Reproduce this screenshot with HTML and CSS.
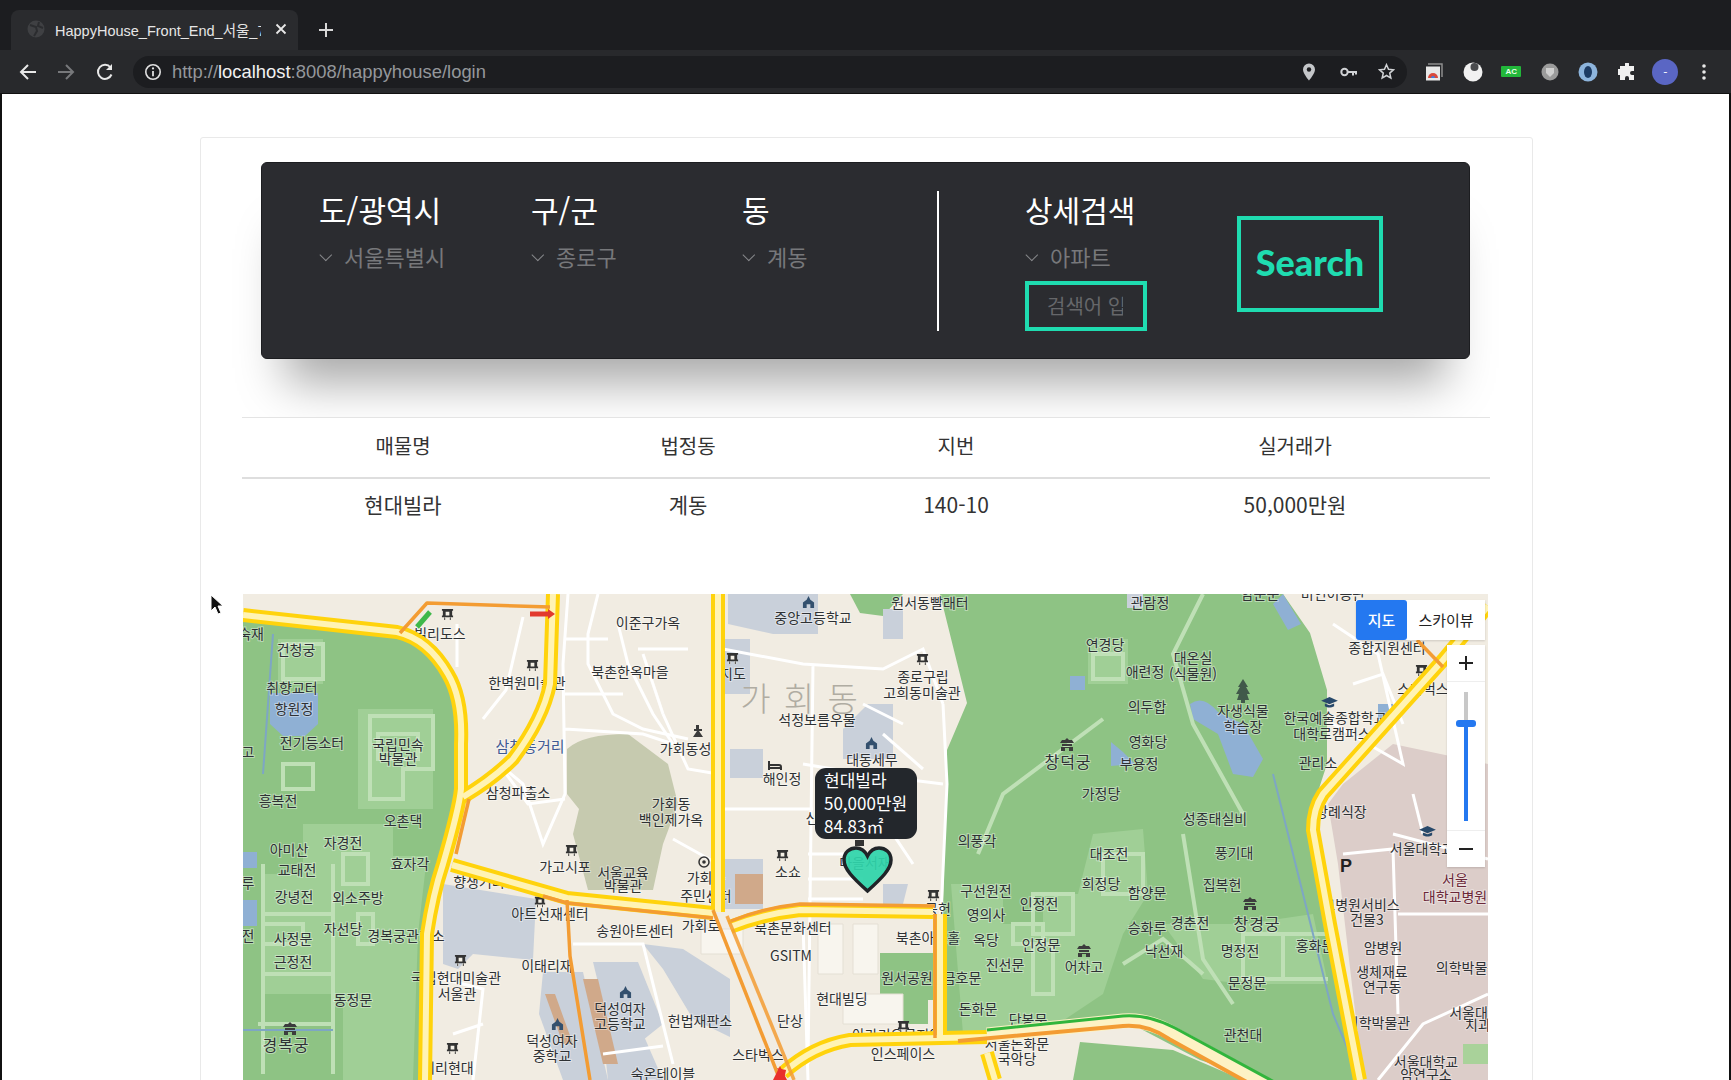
FILE: index.html
```html
<!DOCTYPE html>
<html lang="ko">
<head>
  <meta charset="UTF-8">
  <title>HappyHouse</title>
  <link rel="stylesheet" href="styles.css">
</head>
<body>
  <div class="tabstrip">
    <div class="tab">
      <svg class="tab-icon" width="20" height="20" viewBox="0 0 20 20"><circle cx="10" cy="10" r="8.5" fill="#3f4043"/><path d="M4 6l6 2 1 4-3 5M13 3l-1 4 5 2" fill="none" stroke="#2b2c2f" stroke-width="2"/></svg>
      <span class="tab-title">HappyHouse_Front_End_서울_7</span>
      <svg class="tab-close" width="12" height="12" viewBox="0 0 12 12"><path d="M1.5 1.5l9 9M10.5 1.5l-9 9" stroke="#e8e8e8" stroke-width="1.8"/></svg>
    </div>
    <svg class="tab-new" width="16" height="16" viewBox="0 0 16 16"><path d="M8 1v14M1 8h14" stroke="#d8d8d8" stroke-width="2"/></svg>
  </div>

  <div class="toolbar">
    <svg class="nav-back" width="20" height="20" viewBox="0 0 20 20"><path d="M18 10H3M10 3l-7 7 7 7" fill="none" stroke="#e8e8e8" stroke-width="2"/></svg>
    <svg class="nav-fwd" width="20" height="20" viewBox="0 0 20 20"><path d="M2 10h15M10 3l7 7-7 7" fill="none" stroke="#77787b" stroke-width="2"/></svg>
    <svg class="nav-reload" width="20" height="20" viewBox="0 0 20 20"><path d="M16.5 12.5A7 7 0 1 1 15.5 5.5" fill="none" stroke="#e8e8e8" stroke-width="2"/><path d="M17 2v6h-6z" fill="#e8e8e8"/></svg>
    <div class="omnibox">
      <svg class="info" width="18" height="18" viewBox="0 0 18 18"><circle cx="9" cy="9" r="7.2" fill="none" stroke="#e0e0e0" stroke-width="1.6"/><path d="M9 8v5.2" stroke="#e0e0e0" stroke-width="1.8"/><circle cx="9" cy="5.4" r="1.1" fill="#e0e0e0"/></svg>
      <span class="url">http://<b>localhost</b>:8008/happyhouse/login</span>
      <span class="omni-icons">
        <svg class="omni-pin" width="14" height="18" viewBox="0 0 14 18"><path d="M7 0.5a6 6 0 0 0-6 6c0 4.2 6 11 6 11s6-6.800 6-11a6 6 0 0 0-6-6z" fill="#c4c6c9"/><circle cx="7" cy="6.500" r="2.200" fill="#1c1d20"/></svg>
        <svg class="omni-key" width="18" height="12" viewBox="0 0 18 12"><circle cx="4.500" cy="6" r="3.200" fill="none" stroke="#d0d2d5" stroke-width="2"/><path d="M8 6h9M13 6v3.500M16 6v2.500" fill="none" stroke="#d0d2d5" stroke-width="2"/></svg>
        <svg class="omni-star" width="17" height="17" viewBox="0 0 20 20"><path d="M10 2l2.400 5.400 5.800.600-4.400 3.900 1.300 5.800L10 14.700l-5.100 3 1.300-5.800L1.800 8l5.800-.600z" fill="none" stroke="#d0d2d5" stroke-width="1.800"/></svg>
      </span>
    </div>
    <div class="extensions">
      <svg width="18" height="18" viewBox="0 0 18 18"><path d="M3 1h14v13" fill="none" stroke="#8d8d8d" stroke-width="1.500"/><rect x="1" y="3.500" width="14" height="14" fill="#e8e8e8"/><path d="M3 15a5 5 0 0 1 10 0z" fill="#d9483b"/><path d="M6 15a2 2 0 0 1 4 0z" fill="#3f7ee0"/></svg>
      <svg width="20" height="20" viewBox="0 0 20 20"><circle cx="10" cy="10" r="9.500" fill="#f1f1f1"/><circle cx="11.500" cy="5" r="4" fill="#4a4b4e"/></svg>
      <span class="ext-ac">AC</span>
      <svg width="18" height="18" viewBox="0 0 18 18"><circle cx="9" cy="9" r="8.500" fill="#9b9b9b"/><path d="M5 5h8v5l-4 4-4-4z" fill="#cfcfcf"/></svg>
      <svg width="20" height="20" viewBox="0 0 20 20"><circle cx="10" cy="10" r="9.500" fill="#8db4dc"/><ellipse cx="10" cy="10" rx="4" ry="6" fill="#1d3b63"/></svg>
      <svg width="18" height="18" viewBox="0 0 18 18"><path d="M7 1a2 2 0 0 1 4 0v2h5v5h-2a2 2 0 0 0 0 4h2v5h-5v-2a2 2 0 0 0-4 0v2H2v-5H0a2 2 0 0 1 0-6h2V3h5z" fill="#f0f0f0"/></svg>
      <span class="avatar">-</span>
      <svg width="6" height="18" viewBox="0 0 6 18"><circle cx="3" cy="3" r="1.800" fill="#e8e8e8"/><circle cx="3" cy="9" r="1.800" fill="#e8e8e8"/><circle cx="3" cy="15" r="1.800" fill="#e8e8e8"/></svg>
    </div>
  </div>

  <div class="page">
    <div class="card">
      <div class="search-panel">
        <div class="field field-city">
          <div class="field-title">도/광역시</div>
          <div class="select-like"><i class="chev"></i>서울특별시</div>
        </div>
        <div class="field field-gu">
          <div class="field-title">구/군</div>
          <div class="select-like"><i class="chev"></i>종로구</div>
        </div>
        <div class="field field-dong">
          <div class="field-title">동</div>
          <div class="select-like"><i class="chev"></i>계동</div>
        </div>
        <div class="divider"></div>
        <div class="field field-detail">
          <div class="field-title">상세검색</div>
          <div class="select-like"><i class="chev"></i>아파트</div>
          <div class="keyword"><span>검색어 입력</span></div>
        </div>
        <div class="search-btn">Search</div>
      </div>

      <table class="deal-table">
        <colgroup>
          <col class="col-a"><col class="col-b"><col class="col-c"><col class="col-d">
        </colgroup>
        <thead>
          <tr><th>매물명</th><th>법정동</th><th>지번</th><th>실거래가</th></tr>
        </thead>
        <tbody>
          <tr><td>현대빌라</td><td>계동</td><td>140-10</td><td>50,000만원</td></tr>
        </tbody>
      </table>

      <div class="map">
        <svg class="map-canvas" width="1245" height="486" viewBox="0 0 1245 486">
          <defs>
            <symbol id="gate" viewBox="0 0 14 14"><path d="M1 1h12v2h-1v5h1v2H1V8h1V3H1z" fill="#333"/><path d="M5 4h4v4H5zM3 10h2v3H3zM9 10h2v3H9z" fill="#f4f0e6"/><path d="M3.500 10h1v3h-1zM9.500 10h1v3h-1z" fill="#333"/></symbol>
            <symbol id="palace" viewBox="0 0 14 14"><path d="M7 0l2 2h3l2 3H0l2-3h3zM2 6h10v2H2zM1 9h12v4H1z" fill="#3c3c3c"/><path d="M5 10h4v3H5z" fill="#8fc483"/></symbol>
            <symbol id="school" viewBox="0 0 14 14"><path d="M7 0l2 4 4 3v6H9V9H5v4H1V7l4-3z" fill="#33506e"/></symbol>
            <symbol id="cap" viewBox="0 0 18 14"><path d="M9 1l9 4-9 4-9-4z" fill="#28496a"/><path d="M4 8v3c3 2 7 2 10 0V8l-5 2z" fill="#28496a"/></symbol>
          </defs>

          <rect class="land" width="1245" height="486"/>

          <!-- 비원 / 고궁 -->
          <path class="park" d="M0 21L154 38Q185 45 205 80Q220 105 218 150L218 195Q216 215 200 270Q190 300 184 340L178 486H0z"/>
          <path class="park" d="M697 0L724 109L704 156L700 313L704 440L744 438L877 424L957 466L1017 486H1114L1094 396L1070 236L1070 213L1084 170L1084 96L1067 39L1040 0z"/>
          <path class="park" d="M837 448L930 456L1000 486H830z"/>
          <path class="park" d="M607 0H660L640 22L617 19z"/>
          <path class="park" d="M637 359H704V406H685V430H660V406H637z"/>
          <path class="park-light" d="M60 230H150V262H184L175 340L170 486H100V400H20V280H60z"/>
          <path class="park-light" d="M115 115H190V215H115z"/>
          <path class="park-light" d="M35 45H80V90H35z"/>
          <path class="park-light" d="M708 290H760V330H800V300H835L850 240L900 235L905 300L880 340L860 400L800 440L720 440z"/>
          <path class="park-light" d="M920 330H1000L1070 320L1085 390H1000L960 385z"/>
          <path class="park-light" d="M845 45H885V90H845z"/>
          <path class="pink" d="M1085 210L1100 190L1150 150L1245 170V486H1120L1095 270z"/>
          <path class="pond" d="M27 99H75V130L62 142H40L27 130z"/>
          <path class="pond" d="M947 110Q960 100 975 118L1000 130L1020 165L1010 183L990 180L975 140L950 125z"/>
          <path class="pond" d="M0 258H14V274H0zM0 306H14V332H0zM1040 0L1058 30L1045 36L1030 10z"/>
          <path class="pond" d="M868 148L880 158L892 170L868 172zM827 82H842V96H827z"/>
          <path class="pond" d="M1135 110H1150V125H1135z"/>
          <path class="bld" d="M200 290L293 305L290 366L230 360L215 375L200 370z"/>
          <path class="bld" d="M300 378H340L365 486H320L296 420z"/>
          <path class="bld" d="M400 350L440 355L487 385V443L450 425L420 375z"/>
          <path class="bld" d="M350 368H395L420 430L395 450H370z"/>
          <path class="bld" d="M360 440H400L420 486H365z"/>
          <path class="bld" d="M480 45H507V100H480zM487 155H520V184H487zM640 290H665L660 310H640zM485 0H575V40H530L485 30zM625 110H650V165H600V135zM480 265H520V315H480z"/>
          <path class="bld" d="M884 0H900V14H884zM640 15H660V45H640z"/>
          <path class="gym" d="M340 385L355 385L375 470L360 470z"/>
          <path class="gym" d="M302 400H312L330 450H320z"/>
          <path class="gym" d="M492 280H520V310H492z"/>
          <path class="garden" d="M324 155Q340 140 385 140L425 170L435 210L420 250L410 296H345L330 240L336 215L324 200z"/>
          <path class="pale-bld" d="M458 335H500V360H458zM575 330H600V380H575zM610 330H635V380H610zM600 400H660V430H600z"/>
          <path class="campus" d="M1220 450H1250V470H1220z"/>

          <!-- 궁궐 담장, 보도 -->
          <g class="walk">
            <path d="M127 122H190V175H160V205H127zM135 140H175V165H135z"/>
            <path d="M20 270V480M90 270V480M20 320H90M15 430H90M20 380H90"/>
            <path d="M40 50H80V85H40zM40 170H70V195H40z"/>
            <path d="M100 260H125V290H100zM20 330H60V350H20zM115 320H130V350H115z"/>
            <path d="M850 60H880V85H850zM790 300H830V340H790zM860 260H900V300H860zM790 350H810V400H790zM770 330H800V350H770z"/>
            <path d="M1040 340H1000V385H1085M1040 340H1085M1040 340V385"/>
            <path d="M940 240L960 365L990 410M960 0L930 60L950 130L1000 220"/>
            <path d="M860 125L760 200L735 260M880 370L920 345L960 380"/>
          </g>
          <g class="path-blue">
            <path d="M30 40L20 180M1030 180L1050 260L1090 420L1118 486"/>
            <path d="M0 436H90"/>
          </g>
          <g class="road-w">
            <path d="M325 0L320 70L322 200L300 250L280 190L256 170M214 30V73M280 23L263 96L240 125M322 135L400 140L430 150M355 0L345 40L345 70L370 120L400 135L445 145"/>
            <path d="M375 30L385 70L410 120L430 150M400 60L420 120M322 100H380M322 45H365M395 55H445"/>
            <path d="M322 205L285 210L256 170M430 245L475 270M420 120L445 175L475 180"/>
            <path d="M480 55L560 70L640 75L680 55L700 110M570 70L565 470M700 110L704 190L698 320M560 170L620 180L700 190"/>
            <path d="M480 215H570M565 260L640 260M565 285H620M565 305H620M640 210L650 240L670 270"/>
            <path d="M560 330L565 486M640 140L680 175M620 110L660 130"/>
            <path d="M330 350H400L430 470M200 385L240 395L230 486M210 440L240 430M360 460L420 452"/>
            <path d="M1090 130L1160 170L1135 60L1090 30M1110 90L1140 80L1160 130"/>
            <path d="M1150 240L1245 265M1100 260L1150 255L1155 420M1155 320H1245M1135 486L1180 430L1245 400M1170 200L1180 240"/>
          </g>

          <!-- 지명 -->
          <g class="lb">
            <text x="405" y="28">이준구가옥</text>
            <text x="197" y="39">빌리도스</text>
            <text x="53" y="55">건청궁</text>
            <text x="387" y="77">북촌한옥마을</text>
            <text x="284" y="88">한벽원미술관</text>
            <text x="49" y="93">취향교터</text>
            <text x="51" y="114">항원정</text>
            <text x="69" y="148">전기등소터</text>
            <text x="155" y="150">국립민속</text>
            <text x="155" y="164">박물관</text>
            <text x="449" y="154">가회동성당</text>
            <text x="275" y="198">삼청파출소</text>
            <text x="35" y="206">흥복전</text>
            <text x="428" y="209">가회동</text>
            <text x="428" y="225">백인제가옥</text>
            <text x="160" y="226">오촌댁</text>
            <text x="100" y="248">자경전</text>
            <text x="46" y="255">아미산</text>
            <text x="167" y="269">효자각</text>
            <text x="54" y="275">교태전</text>
            <text x="322" y="272">가고시포</text>
            <text x="380" y="278">서울교육</text>
            <text x="380" y="291">박물관</text>
            <text x="463" y="283">가회동</text>
            <text x="463" y="301">주민센터</text>
            <text x="51" y="302">강녕전</text>
            <text x="115" y="303">외소주방</text>
            <text x="236" y="287">향생거리</text>
            <text x="307" y="319">아트선재센터</text>
            <text x="392" y="336">송원아트센터</text>
            <text x="458" y="331">가회로</text>
            <text x="100" y="334">자선당</text>
            <text x="163" y="341">경복궁관리소</text>
            <text x="50" y="344">사정문</text>
            <text x="50" y="367">근정전</text>
            <text x="304" y="371">이태리재</text>
            <text x="213" y="383">국립현대미술관</text>
            <text x="214" y="399">서울관</text>
            <text x="110" y="405">동정문</text>
            <text x="377" y="414">덕성여자</text>
            <text x="377" y="429">고등학교</text>
            <text x="457" y="426">헌법재판소</text>
            <text x="43" y="450" class="lb-wide">경복궁</text>
            <text x="309" y="446">덕성여자</text>
            <text x="309" y="461">중학교</text>
            <text x="205" y="473">미리현대</text>
            <text x="420" y="479">숙온테이블</text>
            <text x="8" y="39">숙재</text>
            <text x="5" y="157">고</text>
            <text x="5" y="341">전</text>
            <text x="5" y="288">루</text>

            <text x="687" y="8">원서동빨래터</text>
            <text x="907" y="8">관람정</text>
            <text x="570" y="23">중앙고등학교</text>
            <text x="862" y="50">연경당</text>
            <text x="950" y="63">대온실</text>
            <text x="950" y="79">(식물원)</text>
            <text x="902" y="77">애련정</text>
            <text x="680" y="82">종로구립</text>
            <text x="679" y="98">고희동미술관</text>
            <text x="490" y="79">지도</text>
            <text x="904" y="112">의두합</text>
            <text x="574" y="125">석정보름우물</text>
            <text x="1000" y="116">자생식물</text>
            <text x="1000" y="132">학습장</text>
            <text x="905" y="147">영화당</text>
            <text x="629" y="165">대동세무</text>
            <text x="825" y="167" class="lb-wide">창덕궁</text>
            <text x="896" y="169">부용정</text>
            <text x="539" y="184">해인정</text>
            <text x="858" y="199">가정당</text>
            <text x="972" y="224">성종태실비</text>
            <text x="569" y="223">신</text>
            <text x="734" y="246">의풍각</text>
            <text x="866" y="259">대조전</text>
            <text x="991" y="258">풍기대</text>
            <text x="545" y="277">소쇼</text>
            <text x="622" y="268">마을서재</text>
            <text x="858" y="289">희정당</text>
            <text x="743" y="296">구선원전</text>
            <text x="904" y="298">함양문</text>
            <text x="979" y="290">집복헌</text>
            <text x="796" y="309">인정전</text>
            <text x="695" y="314">공헌</text>
            <text x="743" y="320">영의사</text>
            <text x="904" y="333">승화루</text>
            <text x="947" y="328">경춘전</text>
            <text x="1014" y="329" class="lb-wide">창경궁</text>
            <text x="550" y="333">북촌문화센터</text>
            <text x="685" y="343">북촌아트홀</text>
            <text x="743" y="345">옥당</text>
            <text x="798" y="350">인정문</text>
            <text x="921" y="356">낙선재</text>
            <text x="997" y="356">명정전</text>
            <text x="548" y="361">GSITM</text>
            <text x="841" y="372">어차고</text>
            <text x="762" y="370">진선문</text>
            <text x="664" y="383">원서공원</text>
            <text x="719" y="383">금호문</text>
            <text x="1004" y="388">문정문</text>
            <text x="599" y="404">현대빌딩</text>
            <text x="735" y="414">돈화문</text>
            <text x="547" y="426">단상</text>
            <text x="785" y="425">단봉문</text>
            <text x="1000" y="440">관천대</text>
            <text x="774" y="449">서울돈화문</text>
            <text x="774" y="464">국악당</text>
            <text x="515" y="460">스타벅스</text>
            <text x="660" y="459">인스페이스</text>
            <text x="654" y="440">아라리오뮤지엄</text>

            <text x="1144" y="53">종합지원센터</text>
            <text x="1017" y="-1">함춘문</text>
            <text x="1090" y="-1">비인이용관</text>
            <text x="1180" y="94">스타벅스</text>
            <text x="1092" y="123">한국예술종합학교</text>
            <text x="1089" y="139">대학로캠퍼스</text>
            <text x="1075" y="168">관리소</text>
            <text x="1098" y="217">장례식장</text>
            <text x="1179" y="254">서울대학교</text>
            <text x="1118" y="310">보병원서비스</text>
            <text x="1124" y="325">건물3</text>
            <text x="1140" y="353">암병원</text>
            <text x="1139" y="377">생체재료</text>
            <text x="1139" y="392">연구동</text>
            <text x="1225" y="373">의학박물관</text>
            <text x="1232" y="418">서울대학</text>
            <text x="1235" y="430">치과</text>
            <text x="1135" y="428">의학박물관</text>
            <text x="1183" y="467">서울대학교</text>
            <text x="1183" y="480">암연구소</text>
            <text x="1072" y="351">홍화문</text>
          </g>
          <text class="lb lb-blue" x="287" y="151">삼청동거리</text>
          <text class="lb lb-red" x="1212" y="285">서울</text>
          <text class="lb lb-red" x="1212" y="302">대학교병원</text>
          <text class="lb-big" x="557" y="103">가 회 동</text>
          <text class="lb-p" x="1097" y="278">P</text>

          <!-- 지도 아이콘 -->
          <use href="#gate" x="198" y="14" width="13" height="13"/>
          <use href="#gate" x="283" y="65" width="13" height="13"/>
          <use href="#gate" x="322" y="250" width="13" height="13"/>
          <use href="#gate" x="211" y="360" width="13" height="13"/>
          <use href="#gate" x="203" y="448" width="13" height="13"/>
          <use href="#gate" x="533" y="255" width="13" height="13"/>
          <use href="#gate" x="673" y="59" width="13" height="13"/>
          <use href="#gate" x="483" y="58" width="13" height="13"/>
          <use href="#gate" x="684" y="295" width="13" height="13"/>
          <use href="#gate" x="654" y="426" width="13" height="13"/>
          <use href="#gate" x="291" y="302" width="12" height="12"/>
          <use href="#gate" x="1172" y="70" width="13" height="13"/>
          <use href="#palace" x="40" y="428" width="14" height="14"/>
          <use href="#palace" x="817" y="144" width="14" height="14"/>
          <use href="#palace" x="834" y="350" width="14" height="14"/>
          <use href="#palace" x="1000" y="303" width="14" height="14"/>
          <use href="#school" x="308" y="424" width="13" height="13"/>
          <use href="#school" x="376" y="392" width="13" height="13"/>
          <use href="#school" x="559" y="2" width="13" height="13"/>
          <use href="#school" x="622" y="143" width="13" height="13"/>
          <use href="#cap" x="1078" y="102" width="17" height="13"/>
          <use href="#cap" x="1176" y="231" width="17" height="13"/>
          <path d="M1000 88l5 8h-2l4 7h-3l2 6h-4v3h-4v-3h-4l2-6h-3l4-7h-2z" fill="#41594a" transform="translate(0 -3)"/>
          <path d="M453 131h3v4h3v2h-3l4 6h-10l4-6h-3v-2h2z" fill="#3b3b3b"/>
          <circle cx="461" cy="268" r="5" fill="none" stroke="#333" stroke-width="1.500"/><circle cx="461" cy="268" r="1.800" fill="#333"/>
          <path d="M526 167v9M527 171h9a2 2 0 0 1 2 2v3M527 174h11" fill="none" stroke="#333" stroke-width="2"/>

          <!-- 도로 -->
          <g class="road">
            <path d="M0 21L154 38Q185 45 205 80Q220 105 218 150L218 195Q216 215 200 270Q190 300 184 340L182 486"/>
            <path d="M310 0L307 90Q300 125 270 165Q250 185 220 203"/>
            <path d="M475 0V318"/>
            <path d="M209 271L324 304L470 319"/>
            <path d="M540 479Q570 452 607 446L744 443"/>
            <path d="M487 333Q520 320 557 316L690 318"/>
            <path d="M697 320V446"/>
            <path d="M744 459L752 486"/>
            <path d="M1245 12L1200 66L1080 200Q1070 215 1070 236L1087 330L1117 486"/>
          </g>
          <g class="road-in">
            <path d="M0 21L154 38Q185 45 205 80Q220 105 218 150L218 195Q216 215 200 270Q190 300 184 340L182 486"/>
            <path d="M310 0L307 90Q300 125 270 165Q250 185 220 203"/>
            <path d="M475 0V318"/>
            <path d="M209 271L324 304L470 319"/>
            <path d="M540 479Q570 452 607 446L744 443"/>
            <path d="M487 333Q520 320 557 316L690 318"/>
            <path d="M697 320V446"/>
            <path d="M744 459L752 486"/>
            <path d="M1245 12L1200 66L1080 200Q1070 215 1070 236L1087 330L1117 486"/>
          </g>
          <g class="road-orange">
            <path d="M300 302L324 309L470 324"/>
            <path d="M324 306L327 362L347 486"/>
            <path d="M470 316L537 486"/>
            <path d="M484 322L551 486" opacity=".85"/>
            <path d="M488 327Q520 314 557 310L692 312"/>
            <path d="M692 320V444"/>
            <path d="M213 260L226 205"/>
            <path d="M157 39L184 9L307 13"/>
            <path d="M1174 46L1200 73"/>
          </g>
          <path class="road-pale" d="M744 441L880 427Q905 425 930 440L1030 495"/>
          <path class="road-green" d="M744 436L880 422Q905 420 932 434L1035 490"/>
          <path class="road-orange-thin" d="M715 447L880 432Q905 430 926 445L1020 497"/>
          <path class="line-green" d="M174 33L187 18"/>
          <path class="line-red" d="M287 20H308"/>
          <path d="M305 15l7 5-7 5z" fill="#e23a2e"/>
          <path d="M541 486l-7-12 9 2z" fill="#e8302c"/>
          <path d="M530 486l7-14 7 14z" fill="#e8302c"/>

          <!-- 매물 마커 -->
          <path d="M612 246h9v6h-9z" fill="#333"/>
          <path class="heart" d="M624.500 297C610 284 601 275 601 266C601 258 607 254 613 254C618 254 622 257 624.500 262C627 257 631 254 636 254C642 254 648 258 648 266C648 275 639 284 624.500 297Z"/>
        </svg>

        <div class="map-tip">현대빌라<br>50,000만원<br>84.83㎡</div>

        <div class="map-type">
          <span class="type-on">지도</span>
          <span class="type-off">스카이뷰</span>
        </div>
        <div class="map-zoom">
          <div class="zoom-btn zoom-plus"><svg width="16" height="16" viewBox="0 0 16 16"><path d="M8 1v14M1 8h14" stroke="#222" stroke-width="2"/></svg></div>
          <div class="zoom-track"><i class="track-on"></i><i class="track-knob"></i></div>
          <div class="zoom-btn zoom-minus"><svg width="16" height="16" viewBox="0 0 16 16"><path d="M1 8h14" stroke="#222" stroke-width="2"/></svg></div>
        </div>
      </div>
    </div>
  </div>

  <svg class="cursor" width="16" height="22" viewBox="0 0 16 22"><path d="M2 1v16l4-4 3 7 3-1-3-7h5z" fill="#111" stroke="#fff" stroke-width="1"/></svg>
</body>
</html>
```

FILE: styles.css
```css
* { box-sizing: border-box; }
html, body { margin: 0; height: 1080px; overflow: hidden; }
body { font-family: "Noto Sans CJK KR", "Noto Sans", sans-serif; background: #fff; color: #333; position: relative; }

/* browser chrome */
.tabstrip { height: 50px; background: #1c1d20; display: flex; align-items: flex-end; padding-left: 11px; }
.tab { width: 287px; height: 40px; background: #2a2b2e; border-radius: 8px 8px 0 0; display: flex; align-items: center; padding: 0 11px 2px 15px; position: relative; }
.tab-icon { flex: none; }
.tab-title { font: 14.500px "Liberation Sans", "Noto Sans CJK KR", sans-serif; color: #e6e6e6; margin-left: 9px; width: 206px; white-space: nowrap; overflow: hidden; }
.tab-close { margin-left: 14px; flex: none; }
.tab-new { margin: 0 0 12px 20px; }
.toolbar { height: 44px; background: #28292c; display: flex; align-items: center; border-bottom: 1px solid #111; }
.nav-back { margin-left: 18px; }
.nav-fwd { margin-left: 18px; }
.nav-reload { margin-left: 19px; }
.omnibox { width: 1274px; height: 32px; margin-left: 18px; background: #1c1d20; border-radius: 16px; display: flex; align-items: center; padding-left: 11px; }
.url { font: 18.400px "Liberation Sans", sans-serif; color: #94979b; margin-left: 10px; }
.url b { color: #f2f2f2; font-weight: 400; }
.omni-icons { margin-left: auto; display: flex; align-items: center; padding-right: 12px; }
.omni-key { margin-left: 24px; }
.omni-star { margin-left: 20px; }
.extensions { flex: 1; display: grid; grid-template-columns: repeat(8, 38.500px); justify-items: center; align-items: center; padding-left: 8px; }
.ext-ac { width: 20px; height: 11px; background: #22b73a; color: #eaffea; border-radius: 1px; font: bold 8px/11px "Liberation Sans", sans-serif; text-align: center; }
.avatar { width: 26px; height: 26px; border-radius: 50%; background: #5a66c4; color: #fff; font-size: 12px; line-height: 26px; text-align: center; }

/* page */
.page { height: 986px; border-left: 2px solid #111; border-right: 2px solid #111; padding: 43px 198px 0; overflow: hidden; }
.card { width: 1333px; height: 1000px; border: 1px solid #e9e9e9; border-radius: 3px; padding: 24px 41px 0; }

.search-panel { width: 1209px; height: 197px; margin-left: 19px; background: #2b2c30; border-radius: 6px; border: 1px solid #1c1d20; display: flex; position: relative; color: #fff; padding: 24px 0 0 57px; box-shadow: 0 48px 44px -24px rgba(0, 0, 0, .34); }
.field-title { font-size: 30px; line-height: 44px; color: #fff; white-space: nowrap; }
.field-city { width: 212px; }
.field-gu { width: 211px; }
.field-dong { width: 195px; }
.select-like { font-size: 22px; line-height: 32px; margin-top: 9px; color: #77787b; white-space: nowrap; display: flex; align-items: center; }
.chev { width: 9px; height: 9px; border-right: 1.500px solid #86878a; border-bottom: 1.500px solid #86878a; transform: rotate(45deg) translate(-3px, -2px); margin: 4px 13px 0 3px; flex: none; }
.divider { width: 2px; height: 140px; background: #fff; margin: 4px 0 0 0; }
.field-detail { width: 212px; margin-left: 86px; }
.keyword { width: 122px; height: 50px; border: 4px solid #1fdcb0; margin-top: 9px; padding-left: 18px; font-size: 20px; line-height: 42px; color: #66676a; overflow: hidden; white-space: nowrap; }
.keyword span { display: block; width: 76px; overflow: hidden; }
.search-btn { width: 146px; height: 96px; margin: 29px 0 0 0; border: 4px solid #1fdcb0; color: #1fdcb0; font: 900 36px/84px Lato, "Liberation Sans", sans-serif; text-align: center; }

.deal-table { width: 1248px; margin: 58px 0 0 0; border-collapse: collapse; table-layout: fixed; position: relative; background: #fff; }
.col-a { width: 322px; }
.col-b { width: 248px; }
.col-c { width: 288px; }
.col-d { width: 390px; }
.deal-table th, .deal-table td { text-align: center; color: #333; padding: 0 0 4px; }
.deal-table th { height: 60px; font-size: 20px; font-weight: 400; border-top: 1px solid #e4e4e4; border-bottom: 2px solid #dedede; }
.deal-table td { height: 56px; font-size: 21px; font-weight: 400; }

.map { width: 1245px; height: 486px; margin: 60px 0 0 1px; position: relative; overflow: hidden; }
.map-canvas { display: block; }

/* map fills */
.land { fill: #f1ece2; }
.park { fill: #8ec384; }
.park-light { fill: #a0cf96; }
.pink { fill: #dccdc9; }
.pond { fill: #8fb0d4; }
.bld { fill: #c9d0da; }
.pale-bld { fill: #f8f5ee; stroke: #e4dfd4; }
.gym { fill: #d0a98a; }
.garden { fill: #c6caaf; }
.campus { fill: #a9d29a; }
.walk path { fill: none; stroke: #bfe0b6; stroke-width: 4; }
.path-blue path { fill: none; stroke: #7ea6c4; stroke-width: 2; }
.road-w path { fill: none; stroke: #fff; stroke-width: 3; }

.lb text, .lb { font-size: 14px; fill: #2e3134; text-anchor: middle; dominant-baseline: central; paint-order: stroke; stroke: rgba(255, 255, 255, .4); stroke-width: 2px; }
.lb .lb-wide { font-size: 16px; letter-spacing: 1px; }
.lb-blue { fill: #3f5a94; font-size: 15px; }
.lb-red { fill: #6b2838; }
.lb-big { font-size: 33px; font-weight: 300; fill: #b0aca2; text-anchor: middle; dominant-baseline: central; letter-spacing: 2px; }
.lb-p { font: bold 18px "Liberation Sans", sans-serif; fill: #222; }

.road path { fill: none; stroke: #ffd30c; stroke-width: 14; stroke-linejoin: round; }
.road-in path { fill: none; stroke: #fff3b4; stroke-width: 6; stroke-linejoin: round; }
.road-orange path { fill: none; stroke: #f39c33; stroke-width: 3.500; stroke-linejoin: round; }
.road-pale { fill: none; stroke: #fdf2c4; stroke-width: 15; }
.road-green { fill: none; stroke: #31b53c; stroke-width: 3; }
.road-orange-thin { fill: none; stroke: #f39c33; stroke-width: 4; }
.line-green { fill: none; stroke: #3fb84a; stroke-width: 5; }
.line-red { fill: none; stroke: #e23a2e; stroke-width: 5; }
.heart { fill: rgba(46, 212, 170, .93); stroke: #202428; stroke-width: 3.500; }

/* map overlays */
.map-tip { position: absolute; left: 572px; top: 174px; width: 102px; height: 71px; background: #23272c; border-radius: 11px; color: #fff; font-size: 17px; line-height: 23px; padding: 0 0 2px 9px; white-space: nowrap; display: flex; align-items: center; }
.map-type { position: absolute; left: 1113px; top: 6px; width: 129px; height: 40px; background: #fff; display: flex; align-items: center; font-size: 15px; box-shadow: 0 1px 2px rgba(0, 0, 0, .15); }
.type-on { width: 51px; height: 40px; background: #2478f0; color: #fff; border-radius: 3px; text-align: center; line-height: 40px; font-weight: 500; }
.type-off { flex: 1; text-align: center; color: #222; }
.map-zoom { position: absolute; left: 1204px; top: 51px; width: 38px; height: 222px; background: #fff; display: flex; flex-direction: column; box-shadow: 0 1px 2px rgba(0, 0, 0, .15); }
.zoom-btn { height: 37px; display: flex; align-items: center; justify-content: center; }
.zoom-plus { border-bottom: 1px solid #eee; }
.zoom-minus { border-top: 1px solid #eee; }
.zoom-track { flex: 1; position: relative; }
.zoom-track::before { content: ""; position: absolute; left: 17px; top: 10px; bottom: 9px; width: 4px; background: #c8c8c8; }
.track-on { position: absolute; left: 17px; top: 41px; bottom: 9px; width: 4px; background: #2478f0; }
.track-knob { position: absolute; left: 9px; top: 38px; width: 20px; height: 7px; border-radius: 3px; background: #2478f0; }

.cursor { position: absolute; left: 209px; top: 594px; }
```
